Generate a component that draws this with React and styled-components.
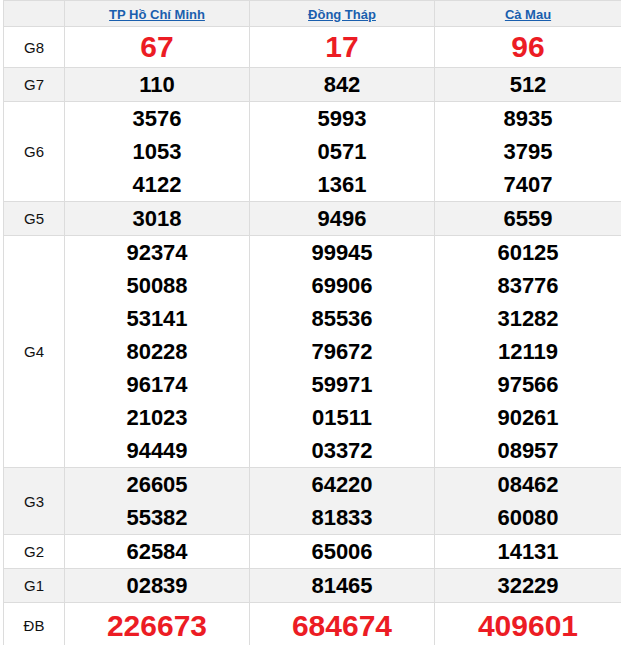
import React from "react";
import styled, { createGlobalStyle } from "styled-components";

const GlobalStyle = createGlobalStyle`
    body {
        margin: 0;
        background: #ffffff;
        font-family: "Liberation Sans", Arial, sans-serif;
    }
`;

const Page = styled.div`
    padding-left: 3px;
`;

const ResultTable = styled.table`
    width: 618px;
    border-collapse: collapse;
    table-layout: fixed;
    border: 1px solid #dcdcdc;
`;

const HeadCell = styled.th`
    height: 25px;
    padding: 0;
    background-color: #f1f1f1;
    border: 1px solid #dcdcdc;
    text-align: center;
    vertical-align: middle;

    a {
        color: #1a5fae;
        font-size: 13px;
        font-weight: bold;
        text-decoration: underline;
    }
`;

const Row = styled.tr`
    background-color: ${(p) => (p.$shaded ? "#f2f2f2" : "#ffffff")};
`;

const PrizeCell = styled.td`
    padding: 0;
    border: 1px solid #dcdcdc;
    text-align: center;
    vertical-align: middle;
    font-size: 15px;
    color: #111;
`;

const NumberCell = styled.td`
    padding: 0;
    border: 1px solid #dcdcdc;
    text-align: center;
    vertical-align: middle;
`;

const Num = styled.div`
    height: ${(p) => p.$h}px;
    line-height: ${(p) => p.$h}px;
    font-size: ${(p) => (p.$big ? "30px" : "22px")};
    font-weight: bold;
    color: ${(p) => (p.$big ? "#ec1c24" : "#000000")};
`;

const provinces = ["TP Hồ Chí Minh", "Đồng Tháp", "Cà Mau"];

const prizes = [
    { name: "G8", big: true, h: 40, values: [["67"], ["17"], ["96"]] },
    { name: "G7", values: [["110"], ["842"], ["512"]] },
    {
        name: "G6",
        values: [
            ["3576", "1053", "4122"],
            ["5993", "0571", "1361"],
            ["8935", "3795", "7407"],
        ],
    },
    { name: "G5", values: [["3018"], ["9496"], ["6559"]] },
    {
        name: "G4",
        values: [
            ["92374", "50088", "53141", "80228", "96174", "21023", "94449"],
            ["99945", "69906", "85536", "79672", "59971", "01511", "03372"],
            ["60125", "83776", "31282", "12119", "97566", "90261", "08957"],
        ],
    },
    {
        name: "G3",
        values: [
            ["26605", "55382"],
            ["64220", "81833"],
            ["08462", "60080"],
        ],
    },
    { name: "G2", values: [["62584"], ["65006"], ["14131"]] },
    { name: "G1", values: [["02839"], ["81465"], ["32229"]] },
    { name: "ĐB", big: true, h: 45, values: [["226673"], ["684674"], ["409601"]] },
];

const App = () => {
    return (
        <Page>
            <GlobalStyle />
            <ResultTable>
                <colgroup>
                    <col style={{ width: 61 }} />
                    <col style={{ width: 185 }} />
                    <col style={{ width: 185 }} />
                    <col style={{ width: 187 }} />
                </colgroup>
                <thead>
                    <tr>
                        <HeadCell />
                        {provinces.map((p) => (
                            <HeadCell key={p}>
                                <a href="#">{p}</a>
                            </HeadCell>
                        ))}
                    </tr>
                </thead>
                <tbody>
                    {prizes.map((prize, i) => (
                        <Row key={prize.name} $shaded={i % 2 === 1}>
                            <PrizeCell>{prize.name}</PrizeCell>
                            {prize.values.map((list, j) => (
                                <NumberCell key={j}>
                                    {list.map((n, k) => (
                                        <Num key={k} $big={prize.big} $h={prize.h || 33}>
                                            {n}
                                        </Num>
                                    ))}
                                </NumberCell>
                            ))}
                        </Row>
                    ))}
                </tbody>
            </ResultTable>
        </Page>
    );
};

export default App;
